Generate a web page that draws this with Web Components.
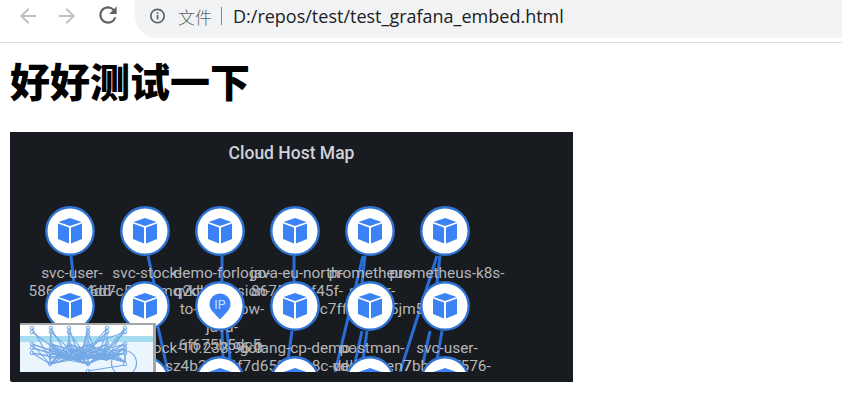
<!DOCTYPE html>
<html lang="zh"><head><meta charset="utf-8"><title>test</title>
<style>html,body{margin:0;padding:0;background:#fff;overflow:hidden}</style></head>
<body>
<browser-bar url="D:/repos/test/test_grafana_embed.html"></browser-bar>
<page-content>
  <page-title>好好测试一下</page-title>
  <host-panel heading="Cloud Host Map"></host-panel>
</page-content>
<script>
const define=(name,render,setup)=>customElements.define(name,class extends HTMLElement{
  connectedCallback(){ if(this.shadowRoot)return; const r=this.attachShadow({mode:'open'}); r.innerHTML=render(this); setup&&setup(r,this);} });

define('nav-icon',el=>{
  const paths={
   back:'M20 11H7.83l5.59-5.59L12 4l-8 8 8 8 1.41-1.41L7.83 13H20v-2z',
   forward:'M4 11h12.17l-5.59-5.59L12 4l8 8-8 8-1.41-1.41L16.17 13H4v-2z',
   reload:'M17.65 6.35A7.958 7.958 0 0 0 12 4c-4.42 0-7.99 3.58-7.99 8s3.57 8 7.99 8c3.73 0 6.84-2.55 7.73-6h-2.08A5.99 5.99 0 0 1 12 18c-3.31 0-6-2.69-6-6s2.69-6 6-6c1.66 0 3.14.69 4.22 1.78L13 11h7V4l-2.35 2.35z'};
  const n=el.getAttribute('name');
  return `<style>:host{display:flex;width:24px;height:24px}svg{width:24px;height:24px;fill:${el.getAttribute('color')}${n==='reload'?';transform:translate(2px,-1px) scale(1.08)':''}}</style>
  <svg viewBox="0 0 24 24"><path d="${paths[n]}"/></svg>`;
});

define('browser-bar',el=>`<style>
 :host{display:flex;align-items:flex-start;height:42px;border-bottom:1px solid #dadce0;box-sizing:content-box;background:#fff;font-family:"Open Sans","Noto Sans CJK SC",sans-serif}
 .nav{display:flex;gap:15px;padding:4px 0 0 16px;width:135px;box-sizing:border-box}
 .pill{flex:1;height:38px;background:#f1f3f4;border-radius:0 0 0 22px;display:flex;align-items:center;padding:0 0 6px 14px;box-sizing:border-box;color:#5f6368}
 .info{width:18px;height:18px;margin-right:11px;flex:none}
 .sep{width:1px;height:18px;background:#80868b;margin:0 11px 0 9px}
 .kind{font-family:"Noto Sans CJK SC",sans-serif;font-weight:300;font-size:17px}
 .url{color:#202124;font-size:18px}
</style>
<div class="nav"><nav-icon name="back" color="#bdc1c6"></nav-icon><nav-icon name="forward" color="#bdc1c6"></nav-icon><nav-icon name="reload" color="#5f6368"></nav-icon></div>
<div class="pill"><svg class="info" viewBox="0 0 18 18"><circle cx="8.500" cy="9" r="6.700" fill="none" stroke="#5f6368" stroke-width="1.700"/><rect x="7.700" y="8" width="1.700" height="4.400" fill="#5f6368"/><rect x="7.700" y="5.300" width="1.700" height="1.700" fill="#5f6368"/></svg><span class="kind">文件</span><span class="sep"></span><span class="url">${el.getAttribute('url')}</span></div>`);

define('page-content',()=>`<style>:host{display:block;padding:0 10px}</style><slot></slot>`);
define('page-title',()=>`<style>:host{display:block;height:89px;font:900 40px/74px "Noto Sans CJK SC",sans-serif;color:#000}</style><slot></slot>`);

const NODES=[
 [70,231,'cube','svc-user-\n586f9c54dd-'],
 [145,231,'cube','svc-stock-\n6d7c5b8f-mqvkz'],
 [220,231,'cube','demo-forlogo-\nq2dh-session-\nto-workflow-\njava-\n6f675b5dc5-'],
 [295,231,'cube','java-eu-north-\n8675dc9f45f-\n5d6c'],
 [370,231,'cube','prometheus-\nserver-\nc7ff7d9c65jm5'],
 [445,231,'cube','prometheus-k8s-'],
 [70,306,'cube','svc-user-\n7f5d'],
 [145,306,'cube','svc-stock-\n6cbd7f59c-sz4b2'],
 [220,306,'ip','10.233.96.0'],
 [295,306,'cube','golang-cp-demo-\n6f7d65949b8c-vdde'],
 [370,306,'cube','postman-\ndel-8c-xen7'],
 [445,306,'cube','svc-user-\n7bb6d9f576-'],
 [145,381,'cube',''],[220,381,'cube',''],[295,381,'cube',''],[370,381,'cube',''],[445,381,'cube','']
];
const EDGES=[[71,256,74,283],[148,256,154,283],[222,256,222,283],[294,256,294,283],
 [363,256,335,372],[365,256,362,283],[437,256,400,372],[440,256,437,283],
 [158,327,168,372],[222,331,223,358],[227,331,230,358],[292,331,288,360],
 [362,331,355,363],[367,331,363,360],[430,331,423,363],[442,331,437,360]];

define('graph-node',el=>{
 const x=+el.getAttribute('x'),y=+el.getAttribute('y'),kind=el.getAttribute('kind');
 const cube=`<polygon points="25,12 36.500,16 25,20 13.500,16" fill="#3b82f6"/><polygon points="13,17.500 24,21.500 24,37.500 13,33" fill="#3b82f6"/><polygon points="37,17.500 26,21.500 26,37.500 37,33" fill="#3b82f6"/>`;
 const ip=`<path d="M25 12.500a10.500 10.500 0 0 1 10.500 10.500c0 6.500-6.500 10.500-10.500 15.500c-4-5-10.500-9-10.500-15.500A10.500 10.500 0 0 1 25 12.500z" fill="#3b82f6"/><text x="25" y="27.500" text-anchor="middle" font-family="Roboto" font-size="12.500" fill="#cfe0fb">IP</text>`;
 const lines=(el.getAttribute('label')||'').split('\n').map(t=>`<div>${t}</div>`).join('');
 return `<style>:host{position:absolute;left:${x-35}px;top:${y-25}px;width:50px;display:block}
 svg{display:block;width:50px;height:50px}
 .label{width:140px;margin:8px 0 0 -43px;text-align:center;font:15.400px/18px Roboto,sans-serif;color:#b4b6b9}
 </style><svg viewBox="0 0 50 50"><circle cx="25" cy="25" r="23.700" fill="#fff" stroke="#2f74d4" stroke-width="2.400"/>${kind==='ip'?ip:cube}</svg><div class="label">${lines}</div>`;
});

define('mini-map',()=>{
 const cols=[12,31,49,68,87,105],rows=[3,7,19,23,28];
 const hubs=[[30,39],[49,34],[60,35],[68,39],[78,34],[87,35],[105,37]];
 let lines='',dots='';
 cols.forEach((x,i)=>{
   rows.forEach((y,j)=>{
     dots+=`<circle cx="${x}" cy="${y}" r="1.800" fill="#fff" fill-opacity=".25" stroke="#74a9e6" stroke-width="1"/>`;
     if(j<2){
       lines+=`<line x1="${x}" y1="${y}" x2="${[30,49,60,68,78,87][(i+j)%6]}" y2="34"/>`;
       if(i>0) lines+=`<line x1="${x}" y1="${y}" x2="${[30,30,49,60,60,78][i]}" y2="35"/>`;
     } else {
       hubs.forEach((h,k)=>{ if(Math.abs(h[0]-x)<62 && (i+j+k)%3!==0) lines+=`<line x1="${x}" y1="${y}" x2="${h[0]}" y2="${h[1]}"/>`;});
     }
   });
 });
 [[30,39],[68,39],[105,39],[68,46]].forEach(h=>dots+=`<circle cx="${h[0]}" cy="${h[1]}" r="1.800" fill="none" stroke="#74a9e6" stroke-width="1"/>`);
 return `<style>:host{position:absolute;left:10px;bottom:0;width:136px;height:49px;display:block;background:#fff;border-top:2px solid #a5a5a5;border-right:3px solid #a5a5a5;box-sizing:border-box}
 .sky{position:absolute;left:0;right:0;top:11px;height:6px;background:#a6dcf0}
 .low{position:absolute;left:0;right:0;top:17px;bottom:0;background:#ebf5fe}
 svg{position:absolute;left:0;top:0;width:133px;height:47px}</style>
 <div class="sky"></div><div class="low"></div>
 <svg viewBox="0 0 133 47"><g stroke="#74a9e6" stroke-width="1.100">${lines}<line x1="68" y1="46" x2="105" y2="40"/></g>${dots}
 <circle cx="104" cy="38" r="12.500" fill="none" stroke="#74a9e6" stroke-width="1.200"/></svg>`;
});

define('graph-canvas',()=>{
 const ox=10,oy=172;
 const e=EDGES.map(([a,b,c,d])=>`<line x1="${a-ox}" y1="${b-oy}" x2="${c-ox}" y2="${d-oy}"/>`).join('');
 return `<style>:host{display:block;position:relative;height:200px;overflow:hidden}
 svg.edges{position:absolute;left:0;top:0;width:563px;height:200px}line{stroke:#2a6dd6;stroke-width:3}</style>
 <svg class="edges" viewBox="0 0 563 200">${e}</svg><div id="n"></div><mini-map></mini-map>`;
},(r)=>{
 const n=r.getElementById('n');
 NODES.forEach(([x,y,k,l])=>{const g=document.createElement('graph-node');g.setAttribute('x',x);g.setAttribute('y',y-172);g.setAttribute('kind',k);g.setAttribute('label',l);n.appendChild(g);});
});

define('host-panel',el=>`<style>:host{display:block;width:563px;height:250px;background:#181b20;border-bottom-left-radius:2px;box-sizing:border-box}
 .t{height:40px;text-align:center;font:500 17.500px/42px Roboto,sans-serif;color:#d0d3da}</style>
 <div class="t">${el.getAttribute('heading')}</div><graph-canvas></graph-canvas>`);
</script>
</body></html>
